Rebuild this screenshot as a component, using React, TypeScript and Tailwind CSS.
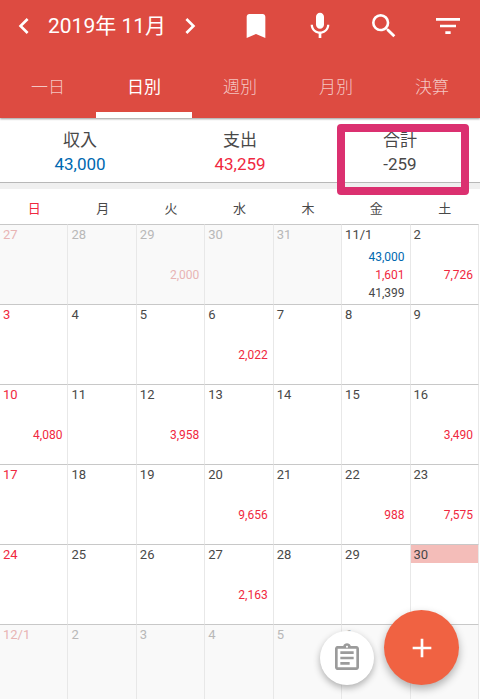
import clsx from "clsx";
import {
  MdAdd,
  MdBookmark,
  MdChevronLeft,
  MdChevronRight,
  MdFilterList,
  MdMic,
  MdOutlineAssignment,
  MdSearch,
} from "react-icons/md";

type TDay = {
  label: string;
  income?: string;
  expense?: string;
  total?: string;
  outside?: boolean;
  today?: boolean;
};

const tabs = ["一日", "日別", "週別", "月別", "決算"];

const weekdays = ["日", "月", "火", "水", "木", "金", "土"];

const actions = [
  { label: "ブックマーク", icon: MdBookmark },
  { label: "音声入力", icon: MdMic },
  { label: "検索", icon: MdSearch },
  { label: "フィルター", icon: MdFilterList },
];

const weeks: TDay[][] = [
  [
    { label: "27", outside: true },
    { label: "28", outside: true },
    { label: "29", outside: true, expense: "2,000" },
    { label: "30", outside: true },
    { label: "31", outside: true },
    { label: "11/1", income: "43,000", expense: "1,601", total: "41,399" },
    { label: "2", expense: "7,726" },
  ],
  [
    { label: "3" },
    { label: "4" },
    { label: "5" },
    { label: "6", expense: "2,022" },
    { label: "7" },
    { label: "8" },
    { label: "9" },
  ],
  [
    { label: "10", expense: "4,080" },
    { label: "11" },
    { label: "12", expense: "3,958" },
    { label: "13" },
    { label: "14" },
    { label: "15" },
    { label: "16", expense: "3,490" },
  ],
  [
    { label: "17" },
    { label: "18" },
    { label: "19" },
    { label: "20", expense: "9,656" },
    { label: "21" },
    { label: "22", expense: "988" },
    { label: "23", expense: "7,575" },
  ],
  [
    { label: "24" },
    { label: "25" },
    { label: "26" },
    { label: "27", expense: "2,163" },
    { label: "28" },
    { label: "29" },
    { label: "30", today: true },
  ],
  [
    { label: "12/1", outside: true },
    { label: "2", outside: true },
    { label: "3", outside: true },
    { label: "4", outside: true },
    { label: "5", outside: true },
    { label: "6", outside: true },
    { label: "7", outside: true },
  ],
];

const Header = () => (
  <header className="relative z-10 bg-[#dd4b41] text-white shadow-[0_1px_2px_rgba(0,0,0,0.4)]">
    <div className="flex h-[52px] items-center">
      <div className="flex flex-1 items-center justify-between pr-[18px] pl-2">
        <button aria-label="前の月">
          <MdChevronLeft className="size-8" />
        </button>
        <h1 className="text-[21px] leading-8 whitespace-nowrap">2019年 11月</h1>
        <button aria-label="次の月">
          <MdChevronRight className="size-8" />
        </button>
      </div>
      {actions.map(({ label, icon: Icon }) => (
        <button
          key={label}
          aria-label={label}
          className="flex w-16 justify-center"
        >
          <Icon className="size-8" />
        </button>
      ))}
    </div>

    {/* Tabs */}
    <nav className="flex">
      {tabs.map((tab) => (
        <button
          key={tab}
          className={clsx(
            "h-[66px] flex-1 border-b-6 pt-3 text-[17px]",
            tab === "日別"
              ? "border-white"
              : "border-transparent font-light text-white/70"
          )}
        >
          {tab}
        </button>
      ))}
    </nav>
  </header>
);

const Summary = () => (
  <section className="grid grid-cols-3 border-b border-[#b8b8b8] pt-[10px] pb-[6px] text-center text-[17px] leading-6 shadow-[0_1px_1px_rgba(0,0,0,0.15)]">
    <div>
      <p>収入</p>
      <p className="text-[#0068b0]">43,000</p>
    </div>
    <div>
      <p>支出</p>
      <p className="text-[#f02840]">43,259</p>
    </div>
    <div className="relative">
      <p>合計</p>
      <p>-259</p>
      {/* Highlight frame */}
      <div className="absolute -top-1 right-[11px] -bottom-[19px] left-[17px] rounded border-8 border-[#db3070]" />
    </div>
  </section>
);

const DayCell = ({ day, sunday }: { day: TDay; sunday: boolean }) => (
  <td
    className={clsx(
      "h-20 border-t border-r border-t-[#c8c8c8] border-r-[#e8e8e8] p-0 align-top",
      day.outside && "bg-[#f9f9f9]"
    )}
  >
    <p
      className={clsx(
        "pt-[2px] pl-[3px] text-[13px] leading-4",
        day.today && "bg-[#f4bdb9]",
        sunday && (day.outside ? "text-[#e8b4b4]" : "text-[#f02840]"),
        !sunday && day.outside && "text-[#b8b8b8]"
      )}
    >
      {day.label}
    </p>
    <div className="grid grid-rows-[18px_18px_18px] pt-[5px] pr-[5px] text-right text-[12px] leading-[18px]">
      <span className="text-[#0068b0]">{day.income}</span>
      <span className={day.outside ? "text-[#e8b4b4]" : "text-[#f02840]"}>
        {day.expense}
      </span>
      <span>{day.total}</span>
    </div>
  </td>
);

const Calendar = () => (
  <table className="w-full table-fixed border-separate border-spacing-0">
    <thead>
      <tr>
        {weekdays.map((weekday, index) => (
          <th
            key={weekday}
            className={clsx(
              "h-[35px] p-0 pt-1 text-[13px] font-normal",
              index === 0 && "text-[#f02840]"
            )}
          >
            {weekday}
          </th>
        ))}
      </tr>
    </thead>
    <tbody>
      {weeks.map((week) => (
        <tr key={week[0].label}>
          {week.map((day, index) => (
            <DayCell key={day.label} day={day} sunday={index === 0} />
          ))}
        </tr>
      ))}
    </tbody>
  </table>
);

const App = () => {
  return (
    <div className="flex h-screen flex-col overflow-hidden bg-white font-[Roboto,'Noto_Sans_CJK_JP',sans-serif] text-[#484848]">
      <Header />
      <Summary />
      <main className="min-h-0 flex-1 border-t-6 border-[#f0f0f0] pr-px">
        <Calendar />
      </main>

      {/* Floating buttons */}
      <div className="fixed right-[21px] bottom-[14px] z-20 flex items-end gap-[10px]">
        <button
          aria-label="メモ"
          className="flex size-[54px] items-center justify-center rounded-full bg-white text-[#9b9b9b] shadow-[0_3px_7px_rgba(0,0,0,0.3)]"
        >
          <MdOutlineAssignment className="size-8" />
        </button>
        <button
          aria-label="追加"
          className="flex size-[75px] items-center justify-center rounded-full bg-[#f06242] text-white shadow-[0_4px_8px_rgba(0,0,0,0.3)]"
        >
          <MdAdd className="size-8" />
        </button>
      </div>
    </div>
  );
};

export default App;
